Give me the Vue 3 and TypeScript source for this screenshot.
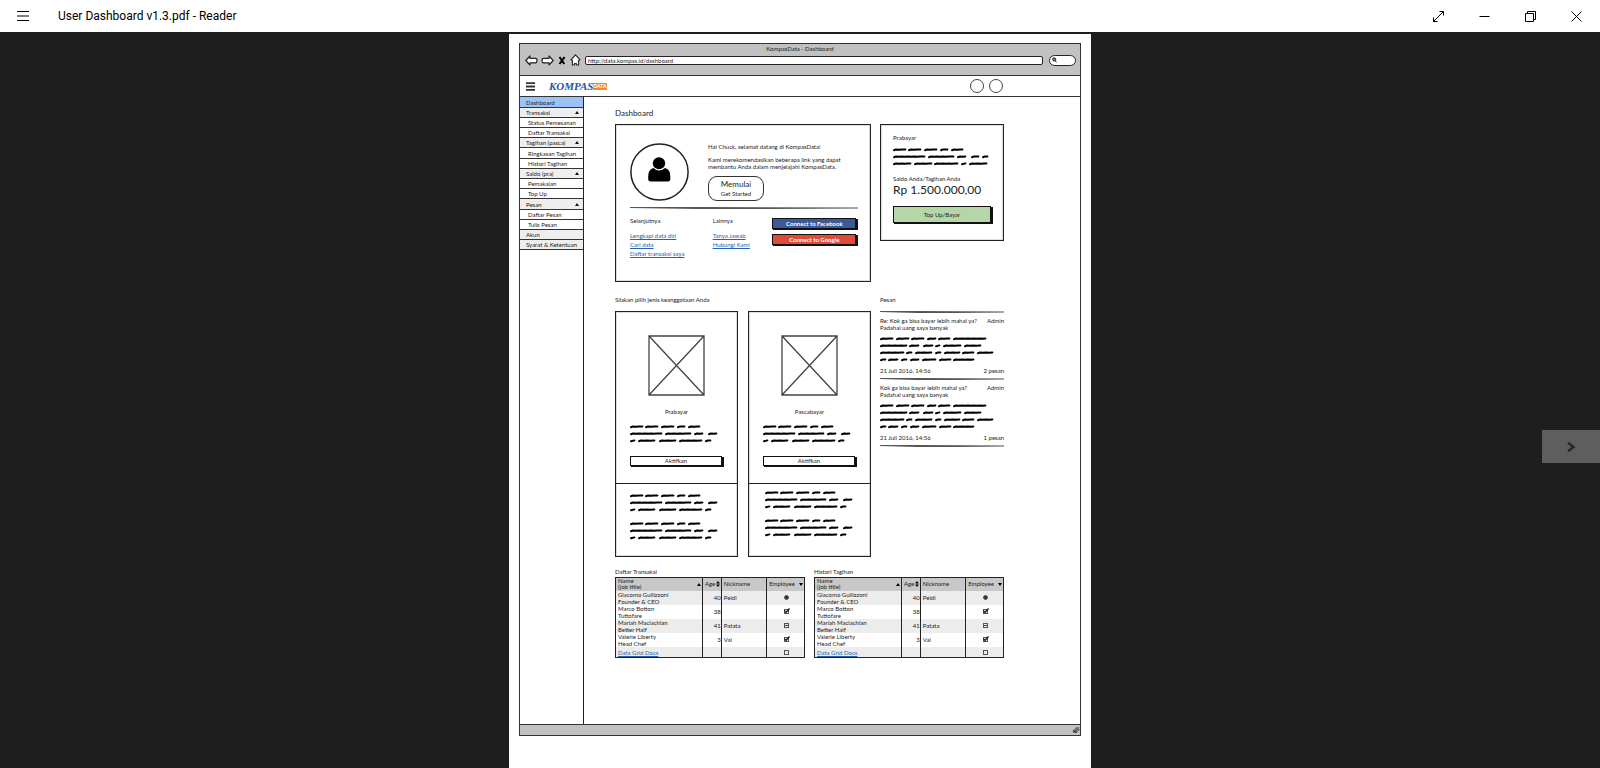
<script setup lang="ts">
import { defineComponent, h } from 'vue'

type Word = [number, number]
type Line = Word[]

interface NavItem {
  label: string
  kind: 'active' | 'group' | 'child' | 'plain'
}

interface Message {
  title: string
  body: string
  count: string
}

interface Row {
  name: string
  job: string
  age: string
  nick: string
  control: 'radio' | 'checked' | 'mixed'
}

const nav: NavItem[] = [
  { label: 'Dashboard', kind: 'active' },
  { label: 'Transaksi', kind: 'group' },
  { label: 'Status Pemesanan', kind: 'child' },
  { label: 'Daftar Transaksi', kind: 'child' },
  { label: 'Tagihan (pasca)', kind: 'group' },
  { label: 'Ringkasan Tagihan', kind: 'child' },
  { label: 'Histori Tagihan', kind: 'child' },
  { label: 'Saldo (pra)', kind: 'group' },
  { label: 'Pemakaian', kind: 'child' },
  { label: 'Top Up', kind: 'child' },
  { label: 'Pesan', kind: 'group' },
  { label: 'Daftar Pesan', kind: 'child' },
  { label: 'Tulis Pesan', kind: 'child' },
  { label: 'Akun', kind: 'plain' },
  { label: 'Syarat & Ketentuan', kind: 'plain' },
]

const planLines: Line[] = [
  [[0, 13], [15, 28], [31, 44], [47, 55], [58, 70]],
  [[0, 32], [35, 61], [64, 73], [78, 87]],
  [[0, 5], [8, 25], [29, 46], [49, 72], [75, 81]],
]
const balanceLines: Line[] = [
  [[0, 13], [15, 28], [31, 44], [47, 55], [58, 70]],
  [[0, 32], [35, 61], [64, 73], [78, 86], [89, 95]],
  [[0, 18], [21, 39], [41, 65], [68, 73], [76, 94]],
]
const messageLines: Line[] = [
  [[0, 13], [16, 29], [31, 44], [47, 56], [58, 70], [73, 106]],
  [[0, 27], [29, 39], [43, 53], [55, 60], [63, 81], [84, 101]],
  [[0, 24], [26, 32], [35, 52], [55, 61], [64, 80], [82, 94], [97, 113]],
  [[0, 6], [8, 18], [21, 27], [30, 39], [42, 56], [59, 71], [73, 94]],
]

const plans: string[] = ['Prabayar', 'Pascabayar']

const messages: Message[] = [
  { title: 'Re: Kok ga bisa bayar lebih mahal ya?', body: 'Padahal uang saya banyak', count: '2 pesan' },
  { title: 'Kok ga bisa bayar lebih mahal ya?', body: 'Padahal uang saya banyak', count: '1 pesan' },
]

const tables: string[] = ['Daftar Transaksi', 'Histori Tagihan']

const rows: Row[] = [
  { name: 'Giacomo Guilizzoni', job: 'Founder & CEO', age: '40', nick: 'Peldi', control: 'radio' },
  { name: 'Marco Botton', job: 'Tuttofare', age: '38', nick: '', control: 'checked' },
  { name: 'Mariah Maclachlan', job: 'Better Half', age: '41', nick: 'Patata', control: 'mixed' },
  { name: 'Valerie Liberty', job: 'Head Chef', age: '3', nick: 'Val', control: 'checked' },
]

/* A word of placeholder copy, drawn as a wobbly marker stroke. */
function stroke([from, to]: Word, y: number): string {
  let d = `M${from + 1} ${y + 0.7}`
  let up = true
  for (let x = from + 3; x < to - 2; x += 3) {
    d += ` L${x} ${y + (up ? -0.1 : 0.3)}`
    up = !up
  }
  return `${d} L${to - 0.6} ${y - 0.1}`
}

const Scribble = defineComponent({
  props: { lines: { type: Array as () => Line[], required: true } },
  setup(props) {
    return () => {
      const width = Math.max(...props.lines.flat().map((w) => w[1])) + 1
      const height = props.lines.length * 7
      return h(
        'svg',
        { width, height, viewBox: `0 0 ${width} ${height}`, 'aria-hidden': 'true' },
        props.lines.flatMap((line, i) =>
          line.map((word) =>
            h('path', {
              d: stroke(word, i * 7 + 3.5),
              fill: 'none',
              stroke: '#000',
              'stroke-width': 2,
              'stroke-linecap': 'round',
              'stroke-linejoin': 'round',
            }),
          ),
        ),
      )
    }
  },
})
</script>

<template>
  <div class="reader">
    <header class="titlebar">
      <button class="menu" aria-label="Menu">
        <svg width="12" height="10" viewBox="0 0 12 10"><path d="M0 .5H12M0 5H12M0 9.5H12" stroke="#000" fill="none" /></svg>
      </button>
      <span class="title">User Dashboard v1.3.pdf - Reader</span>
      <button class="win" aria-label="Full screen">
        <svg width="11" height="11" viewBox="0 0 11 11"><path d="M.5 6.5V10.5H4.5M6.5 .5H10.5V4.5M.5 10.5L10.5 .5" stroke="#000" fill="none" /></svg>
      </button>
      <button class="win" aria-label="Minimize">
        <svg width="11" height="11" viewBox="0 0 11 11"><path d="M.5 5.5H10.5" stroke="#000" fill="none" /></svg>
      </button>
      <button class="win" aria-label="Restore">
        <svg width="11" height="11" viewBox="0 0 11 11"><path d="M.5 2.5H8.5V10.5H.5ZM2.5 2.5V.5H10.5V8.5H8.5" stroke="#000" fill="none" /></svg>
      </button>
      <button class="win" aria-label="Close">
        <svg width="11" height="11" viewBox="0 0 11 11"><path d="M.5 .5L10.5 10.5M10.5 .5L.5 10.5" stroke="#000" fill="none" /></svg>
      </button>
    </header>

    <div class="viewer">
      <article class="page">
        <div class="frame">
          <div class="chrome">
            <div class="tabname">KompasData - Dashboard</div>
            <div class="tools">
              <button aria-label="Back">
                <svg width="13" height="11" viewBox="0 0 13 11"><path d="M.8 5.5L5 1V3.3H10.6Q12 3.3 12 5.5T10.6 7.8H5V10Z" fill="#fff" stroke="#222" stroke-width="1.2" stroke-linejoin="round" /></svg>
              </button>
              <button aria-label="Forward">
                <svg width="13" height="11" viewBox="0 0 13 11"><path d="M12.2 5.5L8 1V3.3H2.4Q1 3.3 1 5.5T2.4 7.8H8V10Z" fill="#fff" stroke="#222" stroke-width="1.2" stroke-linejoin="round" /></svg>
              </button>
              <button class="stop" aria-label="Stop">
                <svg width="8" height="9" viewBox="0 0 8 9"><path d="M1.5 1L6.3 8M6.6 1L1.5 8" stroke="#000" stroke-width="2" fill="none" /></svg>
              </button>
              <button aria-label="Home">
                <svg width="11" height="12" viewBox="0 0 11 12"><path d="M5.5 .8L10 5.8L8.6 6.6V11H6.8L6.4 9.6H4.6L4.2 11H2.4V6.6L1 5.8Z" fill="#fff" stroke="#222" stroke-width="1.1" stroke-linejoin="round" /></svg>
              </button>
              <input class="url" type="text" aria-label="Address" value="http://data.kompas.id/dashboard" />
              <label class="search">
                <svg width="5" height="6" viewBox="0 0 5 6"><circle cx="2.2" cy="2.4" r="1.6" fill="#888" stroke="#222" /><path d="M3.2 3.8L4.6 5.4" stroke="#222" /></svg>
                <input type="search" aria-label="Search" />
              </label>
            </div>
          </div>

          <header class="site">
            <button class="burger" aria-label="Navigation">
              <svg width="9" height="9" viewBox="0 0 9 9"><path d="M0 1.2H9M0 4.5H9M0 7.8H9" stroke="#333" stroke-width="1.8" /></svg>
            </button>
            <a class="logo" href="#"><span class="kompas">KOMPAS</span><span class="data">DATA</span></a>
            <button class="round" aria-label="Notifications"></button>
            <button class="round" aria-label="Account"></button>
          </header>

          <div class="body">
            <nav class="side">
              <a v-for="item in nav" :key="item.label" href="#" :class="['item', item.kind]">
                <span>{{ item.label }}</span>
                <svg v-if="item.kind === 'group'" width="4" height="3" viewBox="0 0 4 3"><path d="M0 3L2 0L4 3Z" fill="#111" /></svg>
              </a>
            </nav>

            <main class="main">
              <h1>Dashboard</h1>

              <div class="columns">
                <section class="card welcome">
                  <div class="greet">
                    <svg class="avatar" width="60" height="58" viewBox="0 0 60 58">
                      <ellipse cx="29.5" cy="29" rx="28.6" ry="28" fill="#fff" stroke="#222" stroke-width="1.5" />
                      <ellipse cx="29" cy="20.3" rx="6.2" ry="6" />
                      <path d="M23.500 25Q29 30 35 25Q40.300 26 40.300 33.500V36Q40.300 38.500 37.500 38.500H21Q18.200 38.500 18.200 36V33.500Q18.200 26 23.500 25Z" />
                    </svg>
                    <div class="intro">
                      <p>Hai Chuck, selamat datang di KompasData!</p>
                      <p>Kami merekomendasikan beberapa link yang dapat<br />membantu Anda dalam menjelajahi KompasData.</p>
                      <button class="start"><b>Memulai</b><span>Get Started</span></button>
                    </div>
                  </div>
                  <div class="rule"></div>
                  <div class="links">
                    <div>
                      <h3>Selanjutnya</h3>
                      <a href="#">Lengkapi data diri</a>
                      <a href="#">Cari data</a>
                      <a href="#">Daftar transaksi saya</a>
                    </div>
                    <div>
                      <h3>Lainnya</h3>
                      <a href="#">Tanya Jawab</a>
                      <a href="#">Hubungi Kami</a>
                    </div>
                    <div class="social">
                      <button class="push facebook">Connect to Facebook</button>
                      <button class="push google">Connect to Google</button>
                    </div>
                  </div>
                </section>

                <section class="card balance">
                  <p>Prabayar</p>
                  <Scribble :lines="balanceLines" />
                  <p class="caption">Saldo Anda/Tagihan Anda</p>
                  <p class="amount">Rp 1.500.000,00</p>
                  <button class="push topup">Top Up/Bayar</button>
                </section>

                <section>
                  <h2>Silakan pilih jenis keanggotaan Anda</h2>
                  <div class="plans">
                    <div v-for="plan in plans" :key="plan" class="card plan">
                      <div class="offer">
                        <svg class="picture" width="57" height="61" viewBox="0 0 57 61">
                          <path d="M1 1H56V60H1ZM1 1L56 60M56 1L1 60" fill="none" stroke="#444" stroke-width="1.3" />
                        </svg>
                        <h3>{{ plan }}</h3>
                        <Scribble :lines="planLines" />
                        <button class="push activate">Aktifkan</button>
                      </div>
                      <div class="terms">
                        <Scribble :lines="planLines" />
                        <Scribble :lines="planLines" />
                      </div>
                    </div>
                  </div>
                </section>

                <section>
                  <h2>Pesan</h2>
                  <article v-for="message in messages" :key="message.count" class="message">
                    <div class="rule"></div>
                    <div class="split subject">
                      <p>{{ message.title }}<br />{{ message.body }}</p>
                      <span>Admin</span>
                    </div>
                    <Scribble :lines="messageLines" />
                    <div class="split stamp">
                      <span>21 Juli 2016, 14:56</span>
                      <span>{{ message.count }}</span>
                    </div>
                  </article>
                  <div class="rule"></div>
                </section>
              </div>

              <div class="grids">
                <table v-for="name in tables" :key="name">
                  <caption>{{ name }}</caption>
                  <colgroup><col class="c-name" /><col class="c-age" /><col class="c-nick" /><col class="c-emp" /></colgroup>
                  <thead>
                    <tr>
                      <th>
                        <div class="head">
                          <span>Name<br />(job title)</span>
                          <svg width="4" height="3" viewBox="0 0 4 3"><path d="M0 3L2 0L4 3Z" /></svg>
                        </div>
                      </th>
                      <th>
                        <div class="head">
                          <span>Age</span>
                          <svg width="4" height="6" viewBox="0 0 4 6"><path d="M0 2.500L2 0L4 2.500ZM0 3.500H4L2 6Z" /></svg>
                        </div>
                      </th>
                      <th>Nickname</th>
                      <th>
                        <div class="head">
                          <span>Employee</span>
                          <svg width="4" height="3" viewBox="0 0 4 3"><path d="M0 0H4L2 3Z" /></svg>
                        </div>
                      </th>
                    </tr>
                  </thead>
                  <tbody>
                    <tr v-for="row in rows" :key="row.name">
                      <td>{{ row.name }}<br />{{ row.job }}</td>
                      <td class="num">{{ row.age }}</td>
                      <td>{{ row.nick }}</td>
                      <td class="tick">
                        <label>
                          <input v-if="row.control === 'radio'" type="radio" :name="name" checked :aria-label="row.name" />
                          <input v-else type="checkbox" :checked="row.control === 'checked'" :indeterminate="row.control === 'mixed'" :aria-label="row.name" />
                          <svg v-if="row.control === 'checked'" class="mark" width="7" height="6" viewBox="0 0 7 6"><path d="M1.500 2.500L3 4.500L6.500 .5" fill="none" stroke="#111" stroke-width="1.2" /></svg>
                        </label>
                      </td>
                    </tr>
                    <tr class="last">
                      <td><a href="#">Data Grid Docs</a></td>
                      <td></td>
                      <td></td>
                      <td class="tick"><label><input type="checkbox" aria-label="Data Grid Docs" /></label></td>
                    </tr>
                  </tbody>
                </table>
              </div>
            </main>
          </div>

          <footer class="status">
            <svg width="8" height="8" viewBox="0 0 8 8"><path d="M1 5.500L5.500 1M1.500 7L7 1.500M3.500 7L7.500 3M1 4.500L4.500 6.500" stroke="#222" stroke-width="1" fill="none" /></svg>
          </footer>
        </div>
      </article>

      <button class="next" aria-label="Next page">
        <svg width="9" height="10" viewBox="0 0 9 10"><path d="M1 .8L6.500 5L1 9.200" fill="none" stroke="#262626" stroke-width="2.400" /></svg>
      </button>
    </div>
  </div>
</template>

<style>
body {
  margin: 0;
  background: #1e1e1e;
}
</style>

<style scoped>
.reader {
  display: flex;
  flex-direction: column;
  height: 100vh;
  overflow: hidden;
  background: #1e1e1e;
  color: #222;
}
.reader * {
  box-sizing: border-box;
}
button {
  margin: 0;
  padding: 0;
  border: 0;
  background: none;
  font: inherit;
  color: inherit;
}
input {
  margin: 0;
  padding: 0;
  font: inherit;
  color: inherit;
}
svg {
  display: block;
  flex: none;
}
h1,
h2,
h3,
p {
  margin: 0;
  font-weight: 400;
}

.titlebar {
  display: flex;
  align-items: center;
  flex: none;
  height: 32px;
  padding-right: 1px;
  background: #fff;
  color: #000;
  font: 12px/16px Roboto, "Open Sans", sans-serif;
}
.menu {
  display: flex;
  justify-content: center;
  width: 46px;
}
.title {
  flex: 1;
  padding-left: 12px;
}
.win {
  display: flex;
  justify-content: center;
  align-items: center;
  width: 46px;
  height: 32px;
}

.viewer {
  position: relative;
  flex: 1;
  min-height: 0;
  padding-top: 2px;
  overflow: hidden;
}
.page {
  width: 100%;
  max-width: 582px;
  margin: 0 auto;
  padding: 9px 10px 40px;
  background: #fff;
  font: 6px/7px Lato, "Open Sans", sans-serif;
}
.next {
  position: absolute;
  right: 0;
  top: 398px;
  display: flex;
  align-items: center;
  justify-content: center;
  width: 58px;
  height: 33px;
  background: #5e5e5e;
}

.frame {
  border: 1px solid #333;
}
.chrome {
  padding-top: 1px;
  height: 32px;
  background: #c1c1c1;
  border-bottom: 1px solid #333;
}
.tabname {
  text-align: center;
  line-height: 8px;
}
.tools {
  display: flex;
  align-items: center;
  gap: 3px;
  height: 14px;
  padding: 0 4px 0 5px;
}
.stop {
  margin: 0 1px;
}
.url {
  flex: 1;
  min-width: 0;
  height: 9px;
  margin-left: 1px;
  padding-left: 2px;
  border: 1px solid #222;
  border-radius: 2px;
  background: #fff;
}
.search {
  display: flex;
  align-items: center;
  width: 27px;
  height: 11px;
  margin-left: 3px;
  padding: 0 2px;
  border: 1px solid #222;
  border-radius: 6px;
  background: #fff;
}
.search input {
  appearance: none;
  flex: 1;
  min-width: 0;
  height: 7px;
  border: 0;
  background: none;
}

.site {
  display: flex;
  align-items: center;
  gap: 5px;
  height: 21px;
  padding: 0 77px 0 6px;
  border-bottom: 1px solid #333;
}
.logo {
  display: flex;
  align-items: center;
  flex: 1;
  margin-left: 9px;
  text-decoration: none;
}
.kompas {
  font: italic bold 11px/12px "Liberation Serif", serif;
  color: #2457a0;
}
.data {
  background: #f58634;
  color: #fff;
  font: bold 5px/7px "Liberation Sans", sans-serif;
}
.round {
  width: 14px;
  height: 14px;
  border: 1px solid #444;
  border-radius: 50%;
}

.body {
  display: flex;
}
.side {
  flex: none;
  width: 64px;
  border-right: 1px solid #222;
}
.item {
  display: flex;
  align-items: center;
  justify-content: space-between;
  height: 10px;
  padding: 0 4px 0 6px;
  border-bottom: 1px solid #333;
  color: inherit;
  text-decoration: none;
  white-space: nowrap;
}
.item:nth-child(5n + 1) {
  height: 11px;
}
.group,
.plain {
  background: #eee;
}
.active {
  background: #9cc3f7;
}
.child {
  padding: 0 0 0 8px;
}

.main {
  flex: 1;
  min-width: 0;
  padding: 11px 76px 66px 31px;
}
h1 {
  margin-bottom: 6px;
  font-size: 8px;
  line-height: 10px;
}
h2 {
  margin-bottom: 7px;
  font-size: 6px;
  line-height: 8px;
}
h3 {
  font-size: 6px;
}
.columns {
  display: grid;
  grid-template-columns: minmax(0, 256fr) minmax(0, 124fr);
  column-gap: 9px;
  row-gap: 14px;
  align-items: start;
}
.card {
  border: 1px solid #222;
  box-shadow: inset 0 0 0 1px #ddd;
}
.welcome {
  height: 158px;
  padding: 18px 12px 0 14px;
}
.greet {
  display: flex;
  gap: 18px;
}
.intro p {
  margin-bottom: 6px;
  white-space: nowrap;
}
.start {
  display: flex;
  flex-direction: column;
  align-items: center;
  justify-content: center;
  gap: 2px;
  width: 56px;
  height: 25px;
  border: 1px solid #333;
  border-radius: 9px;
}
.start b {
  font-size: 8px;
  font-weight: 400;
  line-height: 8px;
}
.rule {
  height: 2px;
  background: #555;
  clip-path: polygon(0 0, 30% 0, 100% 30%, 100% 70%, 60% 100%, 30% 100%, 0 50%);
}
.welcome .rule {
  margin: 6px 0 8px;
}
.links {
  display: grid;
  grid-template-columns: 83fr 60fr 86fr;
}
.links h3 {
  margin-bottom: 7px;
}
a {
  color: #2564ad;
}
.links a {
  display: block;
  line-height: 9px;
}
.push {
  display: block;
  border: 1px solid #111;
  box-shadow: 1px 1px 0 #111, 2px 1px 0 #111;
}
.social {
  display: flex;
  flex-direction: column;
  gap: 5px;
  padding-top: 1px;
}
.social .push {
  width: 84px;
  height: 11px;
  color: #fff;
  font-weight: 700;
  line-height: 8px;
}
.facebook {
  background: #3b5998;
}
.google {
  background: #dd4b39;
}

.balance {
  height: 117px;
  padding: 9px 10px 0 12px;
}
.balance svg {
  margin: 5px 0 8px;
}
.caption {
  line-height: 8px;
}
.amount {
  margin-bottom: 9px;
  font-size: 12px;
  line-height: 14px;
  white-space: nowrap;
}
.topup {
  width: 98px;
  height: 17px;
  background: #b5d7a8;
}

.plans {
  display: grid;
  grid-template-columns: 1fr 1fr;
  gap: 10px;
}
.plan {
  height: 246px;
}
.offer {
  height: 172px;
  padding: 23px 14px 0;
  border-bottom: 1px solid #222;
}
.picture {
  margin: 0 auto 12px;
}
.offer h3 {
  margin-bottom: 8px;
  text-align: center;
}
.activate {
  width: 92px;
  height: 10px;
  margin-top: 12px;
  background: #fff;
  line-height: 8px;
}
.terms {
  display: grid;
  gap: 7px;
  padding: 8px 14px;
}
.plan + .plan .terms {
  padding: 5px 16px;
}

.message {
  height: 67px;
}
.split {
  display: flex;
  justify-content: space-between;
  white-space: nowrap;
}
.subject {
  margin: 4px 0;
}
.stamp {
  margin-top: 4px;
}

.grids {
  display: grid;
  grid-template-columns: 1fr 1fr;
  gap: 9px;
  margin-top: 11px;
}
table {
  width: 100%;
  table-layout: fixed;
  border-collapse: collapse;
  border: 1px solid #222;
}
caption {
  padding-bottom: 1px;
  line-height: 8px;
  text-align: left;
}
.c-name {
  width: 46%;
}
.c-age {
  width: 10%;
}
.c-nick {
  width: 24%;
}
.c-emp {
  width: 20%;
}
th,
td {
  height: 14px;
  padding: 0 1px 0 2px;
  border: 0 solid #222;
  border-left-width: 1px;
  font-weight: 400;
  text-align: left;
  vertical-align: middle;
  white-space: nowrap;
}
th {
  height: 13px;
  background: #c8c8c8;
  line-height: 6px;
}
.head {
  display: flex;
  align-items: center;
  justify-content: space-between;
}
tbody tr:nth-child(odd) {
  background: #ececec;
}
.num {
  padding: 0;
  text-align: right;
}
.last td {
  height: 11px;
  padding-top: 2px;
}
.tick label {
  position: relative;
  display: flex;
  justify-content: center;
}
.tick input {
  appearance: none;
  width: 5px;
  height: 5px;
  border: 1px solid #555;
}
.tick input[type="radio"] {
  border-radius: 50%;
  background: #333;
}
.tick input:indeterminate {
  background: linear-gradient(#444, #444) center / 3px 1px no-repeat;
}
.mark {
  position: absolute;
  left: 50%;
  top: -1px;
  margin-left: -3px;
}

.status {
  display: flex;
  align-items: center;
  justify-content: flex-end;
  height: 11px;
  border-top: 1px solid #333;
  background: #c1c1c1;
}
</style>
